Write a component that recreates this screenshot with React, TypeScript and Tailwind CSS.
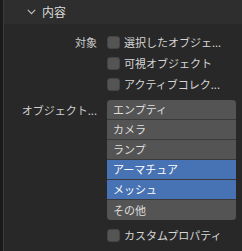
import React from "react";

const font = { fontFamily: '"Noto Sans CJK JP", "Noto Sans", sans-serif' };

function Check({ label }: { label: string }) {
  return (
    <div className="flex items-center h-[21px]">
      <div className="w-[13px] h-[13px] rounded-[3px] bg-[#545454] border border-[#444444] shrink-0" />
      <span className="ml-[4px] text-[11px] text-[#d6d6d6] whitespace-nowrap leading-none">{label}</span>
    </div>
  );
}

const items = [
  { t: "エンプティ", sel: false },
  { t: "カメラ", sel: false },
  { t: "ランプ", sel: false },
  { t: "アーマチュア", sel: true },
  { t: "メッシュ", sel: true },
  { t: "その他", sel: false },
];

export default function App() {
  return (
    <div className="w-[242px] h-[251px] flex bg-[#282828] overflow-hidden" style={font}>
      <div className="w-[3px] bg-[#1b1b1b] shrink-0" />
      <div className="w-[1px] bg-[#3c3c3c] shrink-0" />
      <div className="flex-1 flex flex-col">
        <div className="h-[24px] bg-[#2e2e2e] flex items-center pl-[23px]">
          <svg width="9" height="6" viewBox="0 0 9 6" className="shrink-0">
            <path d="M0.8 0.8 L4.5 4.6 L8.2 0.8" fill="none" stroke="#bdbdbd" strokeWidth="1.2" />
          </svg>
          <span className="ml-[6px] text-[12px] text-[#dcdcdc] leading-none">内容</span>
        </div>
        <div className="flex flex-col pt-[8px]">
          <div className="flex">
            <div className="w-[93px] flex flex-col items-end">
              <div className="h-[21px] flex items-center text-[11px] text-[#cfcfcf] leading-none">対象</div>
            </div>
            <div className="ml-[10px] flex flex-col">
              <Check label="選択したオブジェ..." />
              <Check label="可視オブジェクト" />
              <Check label="アクティブコレク..." />
            </div>
          </div>
          <div className="flex mt-[5px]">
            <div className="w-[93px] flex justify-end">
              <div className="h-[20px] flex items-center text-[11px] text-[#cfcfcf] leading-none whitespace-nowrap">オブジェクト...</div>
            </div>
            <div className="ml-[10px] w-[129px] rounded-[4px] overflow-hidden flex flex-col bg-[#3d3d3d]">
              {items.map((it, i) => (
                <div
                  key={i}
                  className={
                    "h-[20px] flex items-center pl-[6px] text-[11px] leading-none " +
                    (i < items.length - 1 ? "border-b border-[#3a3a3a] " : "") +
                    (it.sel ? "bg-[#4772b3] text-[#ffffff]" : "bg-[#545454] text-[#dedede]")
                  }
                >
                  {it.t}
                </div>
              ))}
            </div>
          </div>
          <div className="flex mt-[5px]">
            <div className="w-[93px]" />
            <div className="ml-[10px]">
              <Check label="カスタムプロパティ" />
            </div>
          </div>
        </div>
      </div>
    </div>
  );
}
